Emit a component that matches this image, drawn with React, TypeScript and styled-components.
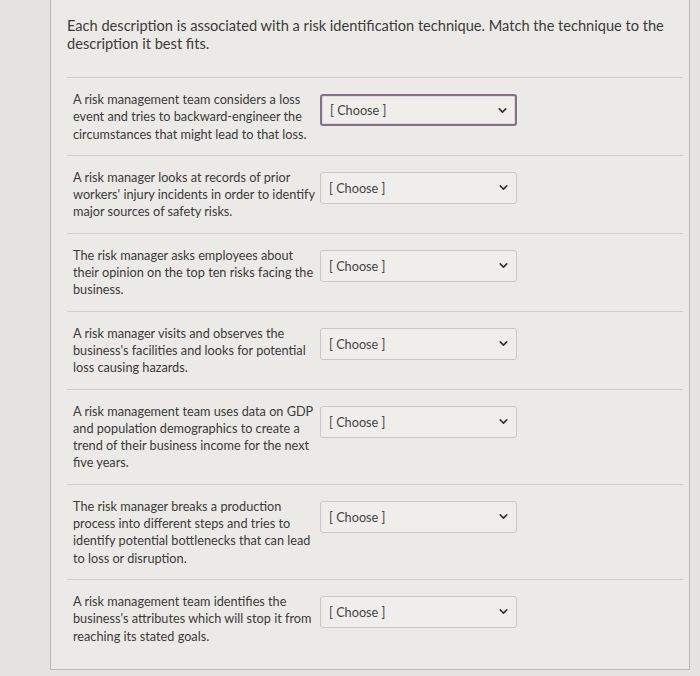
import React from 'react'
import styled, { createGlobalStyle } from 'styled-components'
import { ChevronDown } from 'lucide-react'

const GlobalStyle = createGlobalStyle`
    html, body {
        margin: 0;
        padding: 0;
        background: #e4e3df;
    }
    body {
        font-family: Lato, "Open Sans", "Liberation Sans", sans-serif;
        color: #3a3a3a;
    }
`

const Page = styled.div`
    width: 700px;
    height: 676px;
    overflow: hidden;
`

const Panel = styled.div`
    margin-left: 50px;
    width: 640px;
    box-sizing: border-box;
    padding: 0 6px 0 16px;
    background: #eceae6;
    border: 1px solid #b8b8b4;
    border-top: none;
`

const Prompt = styled.p`
    margin: 0;
    padding: 17px 0 24px;
    font-size: 14.6px;
    line-height: 18px;
    border-bottom: 1px solid #d0cfcb;
`

const Row = styled.div<{ $last?: boolean }>`
    display: flex;
    align-items: flex-start;
    padding: 13px 0 ${p => (p.$last ? '24px' : '12px')} 6px;
    border-bottom: ${p => (p.$last ? 'none' : '1px solid #d0cfcb')};
`

const Description = styled.div`
    width: 247px;
    flex-shrink: 0;
    font-size: 12.7px;
    line-height: 17.3px;
`

const Select = styled.div<{ $focused?: boolean }>`
    margin-top: 3px;
    width: 197px;
    height: 32px;
    box-sizing: border-box;
    display: flex;
    align-items: center;
    justify-content: space-between;
    padding: 0 6px 0 8px;
    background: #efeeea;
    border-radius: 3px;
    border: ${p => (p.$focused ? '2px solid #85708c' : '1px solid #c9c8c4')};
    box-shadow: ${p => (p.$focused ? 'inset 0 0 0 1px #ddd5df' : 'none')};
    font-size: 12.7px;
    color: #444;
    cursor: pointer;
`

const Chevron = styled(ChevronDown)`
    color: #333;
    flex-shrink: 0;
`

const items = [
    'A risk management team considers a loss event and tries to backward-engineer the circumstances that might lead to that loss.',
    "A risk manager looks at records of prior workers' injury incidents in order to identify major sources of safety risks.",
    'The risk manager asks employees about their opinion on the top ten risks facing the business.',
    "A risk manager visits and observes the business's facilities and looks for potential loss causing hazards.",
    'A risk management team uses data on GDP and population demographics to create a trend of their business income for the next five years.',
    'The risk manager breaks a production process into different steps and tries to identify potential bottlenecks that can lead to loss or disruption.',
    "A risk management team identifies the business's attributes which will stop it from reaching its stated goals.",
]

export default function App() {
    return (
        <Page>
            <GlobalStyle />
            <Panel>
                <Prompt>
                    Each description is associated with a risk identification technique. Match the technique to the description it best fits.
                </Prompt>
                {items.map((text, i) => (
                    <Row key={i} $last={i === items.length - 1}>
                        <Description>{text}</Description>
                        <Select $focused={i === 0}>
                            <span>[ Choose ]</span>
                            <Chevron size={13} strokeWidth={3} />
                        </Select>
                    </Row>
                ))}
            </Panel>
        </Page>
    )
}
